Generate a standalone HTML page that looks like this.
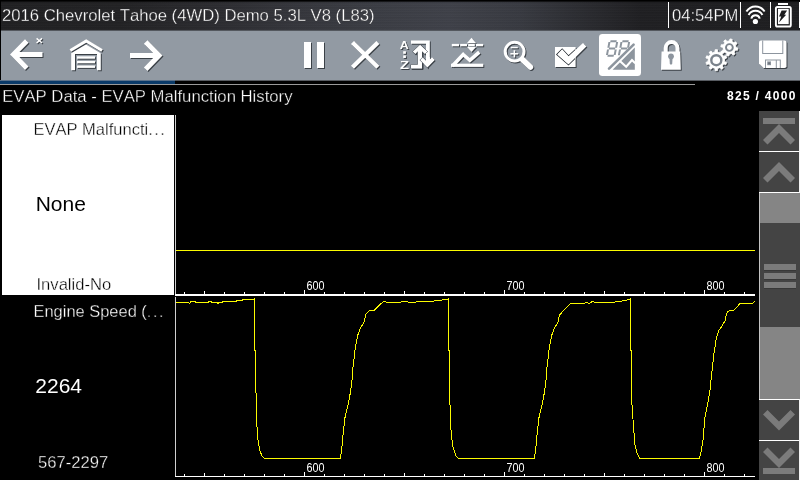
<!DOCTYPE html>
<html>
<head>
<meta charset="utf-8">
<title>EVAP Data</title>
<style>
html,body{margin:0;padding:0;background:#000;}
body{width:800px;height:480px;position:relative;overflow:hidden;font-family:"Liberation Sans",sans-serif;color:#fff;}
.abs{position:absolute;}
.k{-webkit-text-stroke:0.32px #000;}
.w{-webkit-text-stroke:0.32px #fff;}
.h{-webkit-text-stroke:0.3px #28282b;}
.t{position:absolute;white-space:nowrap;line-height:1;transform:translateZ(0);font-kerning:none;}
#hdr{left:0;top:0;width:800px;height:30px;background:linear-gradient(180deg,#000 0,#000 1px,rgba(0,0,0,0) 2.6px),linear-gradient(90deg,#202022 0,#222224 15%,#2a2a2e 25%,#35363c 37%,#3b3d44 47%,#3f4149 56%,#383a41 65%,#2c2d32 72%,#1f1f22 80%,#1e1e20 100%);}
#hdrtex{left:1px;top:1px;width:798px;height:29px;background:repeating-linear-gradient(180deg,rgba(255,255,255,.025) 0,rgba(0,0,0,.06) 2px,rgba(255,255,255,.02) 3px,rgba(0,0,0,.03) 5px);}
#tb{left:1px;top:30px;width:799px;height:51px;background:linear-gradient(180deg,#54585e 0,#54585e 1px,#929aa3 1px,#929aa3 50px,#585c62 50px);}
#blue{left:0;top:80px;width:175px;height:4px;background:linear-gradient(180deg,#5c738c 0,#5c738c 1px,#0a3a69 1px);}
#gline{left:0;top:84px;width:695px;height:1px;background:#9a9a9a;}
#p1{left:2px;top:115px;width:172px;height:180px;background:#fff;}
.sep{position:absolute;top:2px;width:1.3px;height:26px;background:#fff;}
svg{position:absolute;left:0;top:0;overflow:visible;}
.ic{filter:drop-shadow(1px 1px 0.4px rgba(30,35,40,.75));}
.ax{font-size:12px;fill:#fff;font-family:"Liberation Sans",sans-serif;}
</style>
</head>
<body>
<div id="hdr" class="abs"></div>
<div id="hdrtex" class="abs"></div>
<div class="abs" style="left:0;top:0;width:800px;height:1px;background:#000"></div>
<div class="abs" style="left:0;top:0;width:1px;height:81px;background:#000"></div>
<div class="t h" id="title" style="left:2px;top:8.4px;font-size:16.68px;">2016 Chevrolet Tahoe (4WD) Demo 5.3L V8 (L83)</div>
<div class="sep" style="left:668px"></div>
<div class="sep" style="left:740px"></div>
<div class="sep" style="left:770px"></div>
<div class="sep" style="left:799px;width:1px"></div>
<div class="t h" id="time" style="left:672px;top:8.4px;font-size:16.6px;">04:54PM</div>

<div id="tb" class="abs"></div>
<div id="blue" class="abs"></div>
<div id="gline" class="abs"></div>

<div class="t k" id="sub" style="left:2.2px;top:88.8px;font-size:16.7px;">EVAP Data - EVAP Malfunction History</div>
<div class="t" id="cnt" style="left:727px;top:90px;font-size:12px;font-weight:bold;letter-spacing:1.3px;">825 / 4000</div>

<div id="p1" class="abs"></div>
<div class="t w" id="p1a" style="left:33.5px;top:121.4px;font-size:16.5px;color:#000;">EVAP Malfuncti<span style="letter-spacing:1.5px">...</span></div>
<div class="t" id="p1b" style="left:35.7px;top:193.4px;font-size:21px;color:#000;">None</div>
<div class="t w" id="p1c" style="left:36.5px;top:277px;font-size:16.6px;color:#000;">Invalid-No</div>
<div class="t k" id="p2a" style="left:33.5px;top:303.2px;font-size:16.45px;">Engine Speed (<span style="letter-spacing:1.5px">...</span></div>
<div class="t" id="p2b" style="left:35.3px;top:375.3px;font-size:21px;">2264</div>
<div class="t k" id="p2c" style="left:38px;top:455px;font-size:16.6px;">567-2297</div>

<!-- GRAPH -->
<svg id="graph" width="800" height="480" viewBox="0 0 800 480">
<g shape-rendering="crispEdges">
<rect x="175" y="115" width="1" height="180" fill="#d0d0d0"/>
<rect x="175" y="297" width="1" height="180" fill="#d0d0d0"/>
<rect x="175" y="294" width="580" height="2" fill="#fff"/>
<rect x="175" y="476" width="580" height="1.4" fill="#fff"/>
<rect x="184" y="292" width="1" height="2" fill="#fff"/>
<rect x="204" y="291" width="1" height="3" fill="#fff"/>
<rect x="224" y="292" width="1" height="2" fill="#fff"/>
<rect x="244" y="292" width="1" height="2" fill="#fff"/>
<rect x="264" y="292" width="1" height="2" fill="#fff"/>
<rect x="284" y="292" width="1" height="2" fill="#fff"/>
<rect x="304" y="290" width="1" height="4" fill="#fff"/>
<rect x="324" y="292" width="1" height="2" fill="#fff"/>
<rect x="344" y="292" width="1" height="2" fill="#fff"/>
<rect x="364" y="292" width="1" height="2" fill="#fff"/>
<rect x="384" y="292" width="1" height="2" fill="#fff"/>
<rect x="404" y="291" width="1" height="3" fill="#fff"/>
<rect x="424" y="292" width="1" height="2" fill="#fff"/>
<rect x="444" y="292" width="1" height="2" fill="#fff"/>
<rect x="464" y="292" width="1" height="2" fill="#fff"/>
<rect x="484" y="292" width="1" height="2" fill="#fff"/>
<rect x="504" y="290" width="1" height="4" fill="#fff"/>
<rect x="524" y="292" width="1" height="2" fill="#fff"/>
<rect x="544" y="292" width="1" height="2" fill="#fff"/>
<rect x="564" y="292" width="1" height="2" fill="#fff"/>
<rect x="584" y="292" width="1" height="2" fill="#fff"/>
<rect x="604" y="291" width="1" height="3" fill="#fff"/>
<rect x="624" y="292" width="1" height="2" fill="#fff"/>
<rect x="644" y="292" width="1" height="2" fill="#fff"/>
<rect x="664" y="292" width="1" height="2" fill="#fff"/>
<rect x="684" y="292" width="1" height="2" fill="#fff"/>
<rect x="704" y="290" width="1" height="4" fill="#fff"/>
<rect x="724" y="292" width="1" height="2" fill="#fff"/>
<rect x="744" y="292" width="1" height="2" fill="#fff"/>
<rect x="184" y="474" width="1" height="2" fill="#fff"/>
<rect x="204" y="473" width="1" height="3" fill="#fff"/>
<rect x="224" y="474" width="1" height="2" fill="#fff"/>
<rect x="244" y="474" width="1" height="2" fill="#fff"/>
<rect x="264" y="474" width="1" height="2" fill="#fff"/>
<rect x="284" y="474" width="1" height="2" fill="#fff"/>
<rect x="304" y="472" width="1" height="4" fill="#fff"/>
<rect x="324" y="474" width="1" height="2" fill="#fff"/>
<rect x="344" y="474" width="1" height="2" fill="#fff"/>
<rect x="364" y="474" width="1" height="2" fill="#fff"/>
<rect x="384" y="474" width="1" height="2" fill="#fff"/>
<rect x="404" y="473" width="1" height="3" fill="#fff"/>
<rect x="424" y="474" width="1" height="2" fill="#fff"/>
<rect x="444" y="474" width="1" height="2" fill="#fff"/>
<rect x="464" y="474" width="1" height="2" fill="#fff"/>
<rect x="484" y="474" width="1" height="2" fill="#fff"/>
<rect x="504" y="472" width="1" height="4" fill="#fff"/>
<rect x="524" y="474" width="1" height="2" fill="#fff"/>
<rect x="544" y="474" width="1" height="2" fill="#fff"/>
<rect x="564" y="474" width="1" height="2" fill="#fff"/>
<rect x="584" y="474" width="1" height="2" fill="#fff"/>
<rect x="604" y="473" width="1" height="3" fill="#fff"/>
<rect x="624" y="474" width="1" height="2" fill="#fff"/>
<rect x="644" y="474" width="1" height="2" fill="#fff"/>
<rect x="664" y="474" width="1" height="2" fill="#fff"/>
<rect x="684" y="474" width="1" height="2" fill="#fff"/>
<rect x="704" y="472" width="1" height="4" fill="#fff"/>
<rect x="724" y="474" width="1" height="2" fill="#fff"/>
<rect x="744" y="474" width="1" height="2" fill="#fff"/>
<rect x="176" y="250" width="579" height="1" fill="#fafa00"/>
</g>
<text class="ax" x="306.5" y="290" textLength="18" lengthAdjust="spacingAndGlyphs">600</text>
<text class="ax" x="506.5" y="290" textLength="18" lengthAdjust="spacingAndGlyphs">700</text>
<text class="ax" x="706.5" y="290" textLength="18" lengthAdjust="spacingAndGlyphs">800</text>
<text class="ax" x="306.5" y="472" textLength="18" lengthAdjust="spacingAndGlyphs">600</text>
<text class="ax" x="506.5" y="472" textLength="18" lengthAdjust="spacingAndGlyphs">700</text>
<text class="ax" x="706.5" y="472" textLength="18" lengthAdjust="spacingAndGlyphs">800</text>
<polyline fill="none" stroke="#fafa00" stroke-width="1" shape-rendering="crispEdges" stroke-linejoin="round" points="176,302.5 188,302.5 189.5,303.5 191,301.5 195,301.5 196,302.5 208,302.5 209,301.5 211,301.5 212,302.5 217,302.5 218,303.5 219,302.5 222,302.5 223,301.5 236,301.5 237,300.5 242,300.5 243,299.5 253,299.5 254.5,298.5 254.5,350 255.5,351 255.5,380 256.5,405 256.5,420 258,440 260,451 262,456 264.5,458.5 340,458.5 341.5,452 342.5,440 345,417.5 348,405 350.5,392 352,380 352.5,372 355,350 357.5,336 360,329 364,322 366,314 369.5,310.5 374,310.5 380,304.5 384,301.5 387.5,302.5 400,302.5 402.5,301.5 406,301.5 412.5,303 417.5,301.5 430,301.5 437.5,300.5 447.5,299.5 448.5,298.5 448.5,350 449.5,351 449.5,380 450,405 451,430 452.5,445 454.5,452 456,456 458.75,458.5 534,458.5 535.5,452 536.5,440 539,417.5 542,405 544.5,392 546,380 546.5,372 549,350 551.5,336 554,329 558,322 559.5,315 570,303.75 582.5,303.5 587,302.5 588.75,303.5 592.5,301.5 595,302.5 610,302.5 621,301.5 623.75,300.5 630,299.5 630.5,298.5 630.5,350 631.5,351 631.75,380 632,405 633.75,430 635,445 637,453 640,458.5 699.5,458.5 701,452 703,440 705,417 707.5,405 710,390 711,380 713.75,355 716,340 718.75,330 719.4,330 725,321 725.6,317 727.5,312 729.4,310.5 733.75,310.5 740,303.5 752.5,303.5 754.75,301"/>
</svg>

<!-- SCROLLBAR -->
<svg id="scroll" width="800" height="480" viewBox="0 0 800 480">
<g shape-rendering="crispEdges">
<rect x="759" y="111" width="41" height="369" fill="#444444"/>
<rect x="759" y="193" width="41" height="206" fill="#858585"/>
<rect x="760" y="223" width="40" height="104" fill="#444444"/>
<rect x="759" y="193" width="1" height="206" fill="#c4c4c4"/>
<rect x="759" y="151" width="41" height="1" fill="#fff"/>
<rect x="759" y="192" width="41" height="1" fill="#fff"/>
<rect x="759" y="399" width="41" height="1" fill="#fff"/>
<rect x="759" y="440" width="41" height="1" fill="#fff"/>
<rect x="799" y="111" width="1" height="82" fill="#f4f4f4"/>
<rect x="799" y="399" width="1" height="81" fill="#f4f4f4"/>
<rect x="764" y="265" width="32" height="6" fill="#383838"/>
<rect x="764" y="274" width="32" height="6" fill="#383838"/>
<rect x="764" y="283" width="32" height="6" fill="#383838"/>
<rect x="764" y="264" width="32" height="6" fill="#7b7b7b"/>
<rect x="764" y="273" width="32" height="6" fill="#7b7b7b"/>
<rect x="764" y="282" width="32" height="6" fill="#7b7b7b"/>
<rect x="763" y="118" width="32" height="6" fill="#7b7b7b"/>
<rect x="763" y="468" width="32" height="6" fill="#7b7b7b"/>
</g>
<g fill="#7b7b7b">
<polygon points="779,124 795,140 790.5,144.5 779,133 767.5,144.5 763,140"/>
<polygon points="779,162 795,178 790.5,182.5 779,171 767.5,182.5 763,178"/>
<polygon points="779,430.5 795,414.5 790.5,410 779,421.5 767.5,410 763,414.5"/>
<polygon points="779,468 795,452 790.5,447.5 779,459 767.5,447.5 763,452"/>
</g>
</svg>

<!-- TOOLBAR ICONS -->
<svg id="icons" width="800" height="480" viewBox="0 0 800 480">
<defs><clipPath id="cbox"><rect x="555.6" y="47.6" width="19.4" height="18.8"/></clipPath></defs>
<g class="ic" fill="#fff" stroke="none">
<!-- back arrow -->
<path d="M10 54.5 L25 39.2 L28.6 42.8 L19.4 52 L42.5 52 L42.5 57 L19.4 57 L28.6 66.4 L25 70 Z"/>
<path d="M36.6 38.4 L42 43 M42 38.4 L36.6 43" stroke="#fff" stroke-width="1.4" fill="none"/>
<!-- home -->
<path d="M86.2 39.2 L102.8 49.3 L101.3 51.8 L86.2 42.7 L71.1 51.8 L69.6 49.3 Z"/>
<path d="M86 44.6 L100.8 53.3 L100.8 70.2 L97 70.2 L97 54 L75 54 L75 70.2 L71.2 70.2 L71.2 53.3 Z"/>
<rect x="77" y="56.3" width="18" height="2.4"/>
<rect x="77" y="60.9" width="18" height="2.4"/>
<rect x="77" y="65.5" width="18" height="2.4"/>
<!-- forward arrow -->
<path d="M162.5 55.5 L147.5 40.2 L143.9 43.8 L153.1 53 L130 53 L130 58 L153.1 58 L143.9 67.4 L147.5 71 Z"/>
<!-- pause -->
<rect x="304" y="42" width="7" height="26"/>
<rect x="317" y="42" width="7" height="26"/>
<!-- X -->
<path d="M352.5 42.5 L377.9 67.3 M377.9 42.5 L352.5 67.3" fill="none" stroke="#fff" stroke-width="4.3"/>
</g>
<g class="ic" fill="#fff" stroke="none">
<!-- sort icon -->
<text x="399.8" y="48.8" font-size="11.6" font-weight="bold" font-family="Liberation Sans, sans-serif" textLength="9" lengthAdjust="spacingAndGlyphs">A</text>
<text x="400" y="68.7" font-size="10" font-weight="bold" font-family="Liberation Sans, sans-serif" textLength="9" lengthAdjust="spacingAndGlyphs">Z</text>
<rect x="403.2" y="51.2" width="2.7" height="2.6"/>
<rect x="403.2" y="55.4" width="2.7" height="2.6"/>
<path d="M411 40.4 H429.8 V59.8 L432 57.6 L434.5 60.1 L427.4 67.2 L420.3 60.1 L422.8 57.6 L426 60.8 V43.8 H411 Z"/>
<path d="M420.1 44.8 L427.4 51.6 L424.9 54.1 L422 51.3 V68.5 H411 V64.7 H417.8 V51.3 L415.3 54.1 L412.8 51.6 Z" stroke="#5d646d" stroke-width="0.7" paint-order="stroke" style="filter:drop-shadow(0.9px 0.9px 0.3px rgba(30,35,40,.85))"/>
<path d="M420.3 60.1 L422.8 57.6 L427.4 62.2 L427.4 67.2 Z" stroke="#5d646d" stroke-width="1.1" paint-order="stroke"/>
<path d="M426 57 H429.8 V59.8 L432 57.6 L434.5 60.1 L427.4 67.2 L424.2 64 L426 61.4 Z"/>
<!-- threshold graph icon -->
<rect x="451.8" y="43.9" width="7.2" height="2.4"/>
<rect x="460.2" y="43.9" width="6.8" height="2.4"/>
<rect x="468.2" y="43.9" width="6.6" height="2.4"/>
<rect x="476" y="43.9" width="7.2" height="2.4"/>
<polygon points="471.5,37.7 476.3,43.3 466.8,43.3"/>
<polygon points="471.5,52.1 476.3,46.8 466.8,46.8"/>
<rect x="451" y="63.7" width="32.3" height="3.2"/>
<path d="M452.4 66 L463.2 54.5 L469.8 60.3 L479.3 52.1" fill="none" stroke="#fff" stroke-width="3.6" stroke-linejoin="miter"/>
<!-- magnifier -->
<circle cx="514.6" cy="51.6" r="9.4" fill="none" stroke="#fff" stroke-width="3"/>
<path d="M522.6 59.6 L530.4 67" stroke="#fff" stroke-width="5.6" stroke-linecap="round" fill="none"/>
<rect x="510.8" y="46.8" width="7" height="1.5"/>
<rect x="510.4" y="53" width="7.8" height="1.6"/>
<rect x="513.6" y="50.2" width="1.6" height="7.2"/>
<!-- check box -->
<rect x="555" y="47" width="20.6" height="20"/>
<path d="M557.4 54.4 L562.2 49.6 L568.5 56.6 L583 43 L586.4 46.4 L568.5 64.2 Z" stroke="#30363c" stroke-width="2" paint-order="stroke" clip-path="url(#cbox)"/>
<path d="M557.4 54.4 L562.2 49.6 L568.5 56.6 L583 43 L586.4 46.4 L568.5 64.2 Z"/>
<!-- lock -->
<path d="M661.6 51.4 L680.2 51.4 L680.8 69.8 L661 69.8 Z"/>
<path d="M665.7 52 L665.7 48 A5.9 5.9 0 0 1 677.5 48 L677.5 52" fill="none" stroke="#fff" stroke-width="4"/>
<path d="M724.51 61.40 L726.67 62.38 L725.97 64.53 L723.65 64.06 L722.24 65.99 L723.41 68.06 L721.58 69.39 L719.97 67.64 L717.70 68.38 L717.43 70.74 L715.17 70.74 L714.90 68.38 L712.63 67.64 L711.02 69.39 L709.19 68.06 L710.36 65.99 L708.95 64.06 L706.63 64.53 L705.93 62.38 L708.09 61.40 L708.09 59.00 L705.93 58.02 L706.63 55.87 L708.95 56.34 L710.36 54.41 L709.19 52.34 L711.02 51.01 L712.63 52.76 L714.90 52.02 L715.17 49.66 L717.43 49.66 L717.70 52.02 L719.97 52.76 L721.58 51.01 L723.41 52.34 L722.24 54.41 L723.65 56.34 L725.97 55.87 L726.67 58.02 L724.51 59.00 Z" stroke="#fff" stroke-width="0.8" stroke-linejoin="round"/>
<path d="M736.00 47.42 L737.98 48.07 L737.53 50.32 L735.45 50.14 L734.12 52.11 L735.06 53.97 L733.16 55.24 L731.81 53.65 L729.48 54.10 L728.83 56.08 L726.58 55.63 L726.76 53.55 L724.79 52.22 L722.93 53.16 L721.66 51.26 L723.25 49.91 L722.80 47.58 L720.82 46.93 L721.27 44.68 L723.35 44.86 L724.68 42.89 L723.74 41.03 L725.64 39.76 L726.99 41.35 L729.32 40.90 L729.97 38.92 L732.22 39.37 L732.04 41.45 L734.01 42.78 L735.87 41.84 L737.14 43.74 L735.55 45.09 Z" stroke="#fff" stroke-width="0.8" stroke-linejoin="round"/>
<!-- floppy -->
<path d="M761 40.6 L784.5 40.6 Q786.5 40.6 786.5 42.6 L786.5 66.2 Q786.5 68 784.5 68 L763.5 68 L759 63.5 L759 42.6 Q759 40.6 761 40.6 Z"/>
</g>
<rect x="599" y="34" width="42" height="42" rx="3.2" fill="#fff" style="filter:drop-shadow(0.5px 0.5px 0.3px rgba(30,35,40,.35))"/>
<!-- gray details (no shadow) -->
<g fill="#8d959e" stroke="none">
<circle cx="716.3" cy="60.2" r="5" fill="none" stroke="#7b838c" stroke-width="2.4"/>
<circle cx="729.4" cy="47.5" r="3.4" fill="none" stroke="#7b838c" stroke-width="1.9"/>
<!-- lock keyhole -->
<circle cx="671" cy="56.3" r="2.9"/>
<path d="M669.4 57 L672.6 57 L672.2 64 Q671 65 669.8 64 Z"/>
<!-- floppy details -->
<path d="M762.2 40.6 L763.2 40.6 L763.2 53 L782.3 53 L782.3 40.6 L783.3 40.6 L783.3 54 L762.2 54 Z"/>
<path d="M765 59.4 L780.8 59.4 L780.8 68 L779.8 68 L779.8 60.4 L776.8 60.4 L776.8 68 L775.8 68 L775.8 60.4 L766 60.4 L766 68 L765 68 Z"/>
<rect x="767.2" y="61.4" width="3.8" height="3.8"/>
<!-- selected icon inner -->
<path d="M609 68.6 L633.6 44.6" stroke="#8d959e" stroke-width="2.6" stroke-linecap="round" fill="none"/>
<path d="M612.6 69.8 L634.8 69.8 L634.8 47.4 Z"/>
<g transform="translate(605.7,56.5) skewX(-11)" stroke="#8d959e" stroke-width="2" fill="none" stroke-linecap="butt">
<path d="M1.7 -15.3 H7.9 M0.95 -14.4 V-8.8 M8.65 -14.4 V-8.8 M1.7 -7.95 H7.9 M0.95 -7.1 V-1.6 M8.65 -7.1 V-1.6 M1.7 -0.8 H7.9"/>
<path d="M13.7 -15.3 H19.9 M12.95 -14.4 V-8.8 M20.65 -14.4 V-8.8 M13.7 -7.95 H19.9 M12.95 -7.1 V-1.2"/>
</g>
</g>
<path d="M619.6 60.8 L626.2 66.8 L632 60 L635.2 63.2" stroke="#fff" stroke-width="2.1" fill="none"/>
<rect x="768.2" y="62.4" width="1.8" height="1.8" fill="#6a717a"/>
</svg>

<!-- STATUS ICONS -->
<svg id="status" width="800" height="480" viewBox="0 0 800 480">
<g fill="none" stroke="#fff" stroke-linecap="butt">
<path d="M746.4 11.6 A10.6 10.6 0 0 1 764.6 11.6" stroke-width="1.9"/>
<path d="M748.6 15 A7.7 7.7 0 0 1 762.4 15" stroke-width="1.9"/>
<path d="M751.3 18.6 A4.3 4.3 0 0 1 759.7 18.6" stroke-width="1.9"/>
</g>
<circle cx="755.4" cy="21.5" r="2.6" fill="#fff"/>
<!-- battery -->
<rect x="778" y="3" width="10" height="2" fill="#fff"/>
<rect x="775.9" y="7" width="14.9" height="19.5" rx="1.6" fill="none" stroke="#fff" stroke-width="1.9"/>
<rect x="778" y="8.8" width="10.7" height="15.3" fill="#fff"/>
<path d="M781.6 10.5 L787.1 10.5 L784.3 14.8 L786.2 14.8 L779 22.6 L781.2 16.6 L779 16.6 Z" fill="#1c1c1e"/>
</svg>
</body>
</html>
